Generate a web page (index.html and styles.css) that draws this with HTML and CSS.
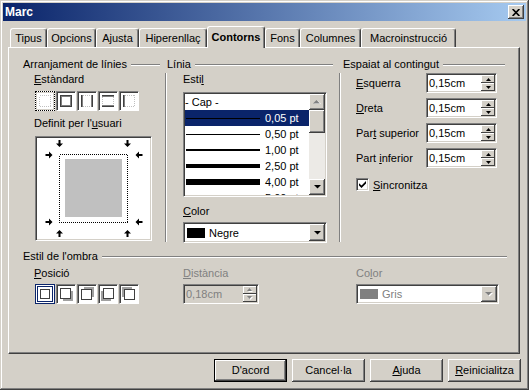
FILE: index.html
```html
<!DOCTYPE html>
<html lang="ca">
<head>
    <meta charset="UTF-8">
    <title>Marc</title>
    <link rel="stylesheet" href="styles.css">
</head>
<body>
    <div class="window">
        <div class="titlebar">
            <span>Marc</span>
            <span class="close raised">
                <svg width="8" height="7" viewBox="0 0 8 7"><path d="M0.6 0 L7.4 7 M7.4 0 L0.6 7" stroke="#000" stroke-width="1.7"/></svg>
            </span>
        </div>

        <div class="tabs">
            <div class="tab">Tipus</div>
            <div class="tab">Opcions</div>
            <div class="tab">Ajusta</div>
            <div class="tab">Hiperenllaç</div>
            <div class="tab active">Contorns</div>
            <div class="tab">Fons</div>
            <div class="tab">Columnes</div>
            <div class="tab">Macroinstrucció</div>
        </div>

        <div class="panel">
            <div class="top">
                <!-- line arrangement -->
                <div class="col col1">
                    <div class="fixedline">Arranjament de línies</div>
                    <div class="col-body">
                        <div class="lbl"><u>E</u>stàndard</div>
                        <div class="valueset">
                            <span class="vbox focus">
                                <svg width="18" height="18" viewBox="0 0 18 18"><rect x="3.5" y="3.5" width="11" height="11" fill="none" stroke="#c0c0c0" stroke-dasharray="1 1" shape-rendering="crispEdges"/></svg>
                            </span>
                            <span class="vbox">
                                <svg width="18" height="18" viewBox="0 0 18 18"><rect x="3.5" y="3.5" width="11" height="11" fill="none" stroke="#404040" stroke-width="1" shape-rendering="crispEdges"/><rect x="4.5" y="4.5" width="9" height="9" fill="none" stroke="#808080" shape-rendering="crispEdges"/></svg>
                            </span>
                            <span class="vbox">
                                <svg width="18" height="18" viewBox="0 0 18 18"><path d="M3 3.5H15M3 14.5H15" stroke="#c0c0c0" stroke-dasharray="1 1" shape-rendering="crispEdges"/><path d="M3.5 3V15M14.5 3V15" stroke="#404040" shape-rendering="crispEdges"/><path d="M4.5 3V15M13.5 3V15" stroke="#808080" shape-rendering="crispEdges"/></svg>
                            </span>
                            <span class="vbox">
                                <svg width="18" height="18" viewBox="0 0 18 18"><path d="M3.5 3V15M14.5 3V15" stroke="#c0c0c0" stroke-dasharray="1 1" shape-rendering="crispEdges"/><path d="M3 3.5H15M3 14.5H15" stroke="#404040" shape-rendering="crispEdges"/><path d="M3 4.5H15M3 13.5H15" stroke="#808080" shape-rendering="crispEdges"/></svg>
                            </span>
                            <span class="vbox">
                                <svg width="18" height="18" viewBox="0 0 18 18"><path d="M3 3.5H15M3 14.5H15M14.5 3V15" stroke="#c0c0c0" stroke-dasharray="1 1" shape-rendering="crispEdges"/><path d="M3.5 3V15" stroke="#404040" shape-rendering="crispEdges"/><path d="M4.5 3V15" stroke="#808080" shape-rendering="crispEdges"/></svg>
                            </span>
                        </div>
                        <div class="lbl gap">Definit per l'<u>u</u>suari</div>
                        <div class="preview sunken">
                            <svg width="113" height="101" viewBox="0 0 113 101">
                                <defs>
                                    <path id="arr" d="M-1 -3.5H1V0H3.5L0 3.5L-3.5 0H-1Z"/>
                                </defs>
                                <rect x="28" y="21" width="57" height="58" fill="#c0c0c0"/>
                                <rect x="22.5" y="16.5" width="68" height="68" fill="none" stroke="#000" stroke-dasharray="1 1" shape-rendering="crispEdges"/>
                                <use href="#arr" transform="translate(22.5 5.5)"/>
                                <use href="#arr" transform="translate(90.5 5.5)"/>
                                <use href="#arr" transform="translate(12 17) rotate(-90)"/>
                                <use href="#arr" transform="translate(12 84) rotate(-90)"/>
                                <use href="#arr" transform="translate(102 17) rotate(90)"/>
                                <use href="#arr" transform="translate(102 84) rotate(90)"/>
                                <use href="#arr" transform="translate(22.5 95.5) rotate(180)"/>
                                <use href="#arr" transform="translate(90.5 95.5) rotate(180)"/>
                            </svg>
                        </div>
                    </div>
                </div>

                <!-- line style -->
                <div class="col col2">
                    <div class="fixedline">Línia</div>
                    <div class="col-body">
                        <div class="lbl">Esti<u>l</u></div>
                        <div class="listbox sunken">
                            <div class="rows">
                                <div class="row">- Cap -</div>
                                <div class="row sel"><span class="ln w1"></span>0,05 pt</div>
                                <div class="row"><span class="ln w1"></span>0,50 pt</div>
                                <div class="row"><span class="ln w2"></span>1,00 pt</div>
                                <div class="row"><span class="ln w4"></span>2,50 pt</div>
                                <div class="row"><span class="ln w6"></span>4,00 pt</div>
                                <div class="row"><span class="ln w7"></span>5,00 pt</div>
                            </div>
                            <div class="vscroll">
                                <span class="sbtn raised">
                                    <svg width="8" height="5" viewBox="0 0 8 5"><path d="M1 4H8L4.5 0.5Z" fill="#fff"/><path d="M0 3.5H7L3.5 0Z" fill="#808080"/></svg>
                                </span>
                                <span class="thumb raised"></span>
                                <span class="track"></span>
                                <span class="sbtn raised">
                                    <svg width="7" height="4" viewBox="0 0 7 4"><path d="M0 0H7L3.5 3.5Z"/></svg>
                                </span>
                            </div>
                        </div>
                        <div class="lbl gap-color"><u>C</u>olor</div>
                        <div class="combo sunken">
                            <span class="swatch"></span>
                            <span class="combo-text">Negre</span>
                            <span class="combo-btn raised">
                                <svg width="7" height="4" viewBox="0 0 7 4"><path d="M0 0H7L3.5 3.5Z"/></svg>
                            </span>
                        </div>
                    </div>
                </div>

                <!-- spacing to contents -->
                <div class="col col3">
                    <div class="fixedline">Espaiat al contingut</div>
                    <div class="col-body">
                        <div class="fields">
                            <div class="field-row">
                                <span class="lbl"><u>E</u>squerra</span>
                                <div class="spin sunken"><span class="spin-val">0,15cm</span><span class="spin-btns"><span class="sb raised"><svg width="5" height="3" viewBox="0 0 5 3"><path d="M0 3H5L2.5 0Z"/></svg></span><span class="sb raised"><svg width="5" height="3" viewBox="0 0 5 3"><path d="M0 0H5L2.5 3Z"/></svg></span></span></div>
                            </div>
                            <div class="field-row">
                                <span class="lbl"><u>D</u>reta</span>
                                <div class="spin sunken"><span class="spin-val">0,15cm</span><span class="spin-btns"><span class="sb raised"><svg width="5" height="3" viewBox="0 0 5 3"><path d="M0 3H5L2.5 0Z"/></svg></span><span class="sb raised"><svg width="5" height="3" viewBox="0 0 5 3"><path d="M0 0H5L2.5 3Z"/></svg></span></span></div>
                            </div>
                            <div class="field-row">
                                <span class="lbl">Par<u>t</u> superior</span>
                                <div class="spin sunken"><span class="spin-val">0,15cm</span><span class="spin-btns"><span class="sb raised"><svg width="5" height="3" viewBox="0 0 5 3"><path d="M0 3H5L2.5 0Z"/></svg></span><span class="sb raised"><svg width="5" height="3" viewBox="0 0 5 3"><path d="M0 0H5L2.5 3Z"/></svg></span></span></div>
                            </div>
                            <div class="field-row">
                                <span class="lbl">Part <u>i</u>nferior</span>
                                <div class="spin sunken"><span class="spin-val">0,15cm</span><span class="spin-btns"><span class="sb raised"><svg width="5" height="3" viewBox="0 0 5 3"><path d="M0 3H5L2.5 0Z"/></svg></span><span class="sb raised"><svg width="5" height="3" viewBox="0 0 5 3"><path d="M0 0H5L2.5 3Z"/></svg></span></span></div>
                            </div>
                        </div>
                        <div class="check-row">
                            <span class="check sunken">
                                <svg width="7" height="7" viewBox="0 0 7 7"><path d="M0 2.2L2.5 4.5L7 0V2.4L2.5 6.9L0 4.4Z"/></svg>
                            </span>
                            <span><u>S</u>incronitza</span>
                        </div>
                    </div>
                </div>
            </div>

            <!-- shadow style -->
            <div class="shadow">
                <div class="fixedline">Estil de l'ombra</div>
                <div class="shadow-body">
                    <div>
                        <div class="lbl"><u>P</u>osició</div>
                        <div class="valueset ctl">
                            <span class="vbox picked">
                                <svg width="18" height="18" viewBox="0 0 18 18"><rect x="4.5" y="4.5" width="9" height="9" fill="#fff" stroke="#404040" shape-rendering="crispEdges"/></svg>
                            </span>
                            <span class="vbox">
                                <svg width="18" height="18" viewBox="0 0 18 18"><rect x="6" y="6" width="10" height="10" fill="#a0a0a0"/><rect x="3.5" y="3.5" width="10" height="10" fill="#fff" stroke="#404040" shape-rendering="crispEdges"/></svg>
                            </span>
                            <span class="vbox">
                                <svg width="18" height="18" viewBox="0 0 18 18"><rect x="6" y="2" width="10" height="10" fill="#a0a0a0"/><rect x="3.5" y="4.5" width="10" height="10" fill="#fff" stroke="#404040" shape-rendering="crispEdges"/></svg>
                            </span>
                            <span class="vbox">
                                <svg width="18" height="18" viewBox="0 0 18 18"><rect x="2" y="6" width="10" height="10" fill="#a0a0a0"/><rect x="4.5" y="3.5" width="10" height="10" fill="#fff" stroke="#404040" shape-rendering="crispEdges"/></svg>
                            </span>
                            <span class="vbox">
                                <svg width="18" height="18" viewBox="0 0 18 18"><rect x="2" y="2" width="10" height="10" fill="#a0a0a0"/><rect x="4.5" y="4.5" width="10" height="10" fill="#fff" stroke="#404040" shape-rendering="crispEdges"/></svg>
                            </span>
                        </div>
                    </div>
                    <div>
                        <div class="lbl off"><u>D</u>istància</div>
                        <div class="spin sunken disabled ctl"><span class="spin-val">0,18cm</span><span class="spin-btns"><span class="sb raised"><svg width="6" height="4" viewBox="0 0 6 4"><path d="M1 4H6L3.5 1.5Z" fill="#fff"/><path d="M0 3H5L2.5 0Z" fill="#808080"/></svg></span><span class="sb raised"><svg width="6" height="4" viewBox="0 0 6 4"><path d="M1 1H6L3.5 4Z" fill="#fff"/><path d="M0 0H5L2.5 3Z" fill="#808080"/></svg></span></span></div>
                    </div>
                    <div>
                        <div class="lbl off">Co<u>l</u>or</div>
                        <div class="combo sunken disabled ctl">
                            <span class="swatch"></span>
                            <span class="combo-text">Gris</span>
                            <span class="combo-btn raised">
                                <svg width="8" height="5" viewBox="0 0 8 5"><path d="M1 1H8L4.5 4.5Z" fill="#fff"/><path d="M0 0H7L3.5 3.5Z" fill="#808080"/></svg>
                            </span>
                        </div>
                    </div>
                </div>
            </div>
        </div>

        <div class="buttons">
            <div class="btn raised default">D'acord</div>
            <div class="btn raised">Cancel·la</div>
            <div class="btn raised"><u>A</u>juda</div>
            <div class="btn raised"><u>R</u>einicialitza</div>
        </div>
    </div>
</body>
</html>
```

FILE: styles.css
```css
* {
    box-sizing: border-box;
}
body {
    margin: 0;
    background-color: #d4d0c8;
    font-family: "Liberation Sans", Arial, sans-serif;
    font-size: 11px;
    color: #000;
}
u {
    text-decoration: underline;
    text-underline-offset: 1px;
}
svg {
    display: block;
}

/* bevels */
.raised {
    background-color: #d4d0c8;
    box-shadow: inset -1px -1px #404040, inset 1px 1px #fff, inset -2px -2px #808080, inset 2px 2px #d4d0c8;
}
.sunken {
    background-color: #fff;
    border: 1px solid;
    border-color: #808080 #fff #fff #808080;
    box-shadow: inset 1px 1px #404040, inset -1px -1px #d4d0c8;
    padding: 1px;
}

/* window frame */
.window {
    width: 529px;
    height: 390px;
    padding: 3px;
    background-color: #d4d0c8;
    box-shadow: inset -1px -1px #404040, inset 1px 1px #d4d0c8, inset -2px -2px #808080, inset 2px 2px #fff;
}
.titlebar {
    height: 18px;
    display: flex;
    align-items: center;
    justify-content: space-between;
    padding: 0 2px 0 2px;
    background: linear-gradient(to right, #0a246a, #a6caf0);
    color: #fff;
    font-weight: bold;
    font-size: 12px;
}
.close {
    width: 16px;
    height: 14px;
    display: flex;
    align-items: center;
    justify-content: center;
}

/* tabs */
.tabs {
    display: grid;
    grid-template-columns: 37px 49px 43px 68px 58px 35px 61px 95px;
    align-items: end;
    height: 21px;
    margin: 5px 0 0 7px;
}
.tab {
    height: 19px;
    border: 1px solid #fff;
    border-bottom: 0;
    border-right-color: #404040;
    border-radius: 3px 3px 0 0;
    box-shadow: inset -1px 0 #808080;
    text-align: center;
    line-height: 18px;
    white-space: nowrap;
    overflow: hidden;
}
.tab.active {
    position: relative;
    height: 22px;
    margin-bottom: -1px;
    background-color: #d4d0c8;
    font-weight: bold;
    line-height: 20px;
}

/* tab page */
.panel {
    width: 512px;
    height: 307px;
    margin-left: 5px;
    padding: 10px 0 0 14px;
    border: 1px solid #fff;
    border-right-color: #404040;
    border-bottom-color: #404040;
    box-shadow: inset -1px -1px #808080;
}
.top {
    display: flex;
}
.fixedline {
    display: flex;
    align-items: center;
    height: 13px;
    line-height: 13px;
    white-space: nowrap;
}
.fixedline::after {
    content: "";
    flex: 1;
    margin-left: 4px;
    border-top: 1px solid #808080;
    border-bottom: 1px solid #fff;
}
.lbl {
    line-height: 13px;
    white-space: nowrap;
}
.lbl.off {
    color: #808080;
}
.col-body {
    height: 169px;
    margin-top: 2px;
}
.col1 {
    width: 137px;
}
.col1 .col-body {
    padding-left: 11px;
}
.col2 {
    width: 166px;
    margin-left: 7px;
}
.col2 .col-body {
    margin-left: -2px;
    padding-left: 17px;
    border-left: 1px solid #808080;
    box-shadow: inset 1px 0 #fff;
}
.col3 {
    width: 162px;
    margin-left: 10px;
}
.col3 .col-body {
    margin-left: -4px;
    padding-left: 16px;
    border-left: 1px solid #808080;
    box-shadow: inset 1px 0 #fff;
}

/* value sets */
.valueset {
    display: flex;
    gap: 1px;
    margin: 5px 0 0 1px;
}
.vbox {
    width: 20px;
    height: 20px;
    background-color: #fff;
    border: 1px solid;
    border-color: #808080 #fff #fff #808080;
    box-shadow: inset 1px 1px #404040;
}
.vbox.focus {
    border: 1px dotted #000;
    box-shadow: inset 1px 1px #d4d0c8, inset -1px -1px #d4d0c8;
}
.vbox.picked {
    border: 1px solid #0a246a;
    box-shadow: inset 0 0 0 1px #fff, inset 0 0 0 2px #0a246a;
}
.lbl.gap {
    margin-top: 6px;
}
.preview {
    width: 117px;
    height: 105px;
    margin: 6px 0 0 1px;
}

/* line style list */
.listbox {
    width: 144px;
    height: 105px;
    margin-top: 6px;
    display: flex;
}
.rows {
    flex: 1;
    overflow: hidden;
}
.row {
    height: 16px;
    display: flex;
    align-items: center;
    white-space: nowrap;
}
.row.sel {
    background-color: #0a246a;
    color: #fff;
}
.ln {
    flex: none;
    width: 74px;
    margin: 0 5px 0 1px;
    background-color: #000;
}
.ln.w1 { height: 1px; }
.ln.w2 { height: 2px; }
.ln.w4 { height: 4px; }
.ln.w6 { height: 6px; }
.ln.w7 { height: 7px; }
.vscroll {
    width: 16px;
    display: flex;
    flex-direction: column;
}
.sbtn {
    height: 16px;
    display: flex;
    align-items: center;
    justify-content: center;
}
.thumb {
    height: 23px;
}
.track {
    flex: 1;
    background-color: #eceae6;
}
.lbl.gap-color {
    margin-top: 8px;
}

/* combo box */
.combo {
    width: 144px;
    height: 21px;
    margin-top: 4px;
    display: flex;
    align-items: center;
}
.swatch {
    width: 18px;
    height: 10px;
    margin-left: 2px;
    background-color: #000;
}
.combo-text {
    flex: 1;
    margin-left: 4px;
}
.combo-btn {
    width: 16px;
    align-self: stretch;
    display: flex;
    align-items: center;
    justify-content: center;
}
.combo.disabled .swatch {
    background-color: #808080;
}
.combo.disabled .combo-text {
    color: #808080;
}

/* spin fields */
.fields {
    display: flex;
    flex-direction: column;
    gap: 5px;
}
.field-row {
    display: flex;
    align-items: center;
    height: 20px;
}
.field-row .lbl {
    width: 70px;
}
.spin {
    width: 71px;
    height: 20px;
    display: flex;
    align-items: center;
}
.spin-val {
    flex: 1;
    padding-left: 1px;
}
.spin-btns {
    width: 14px;
    align-self: stretch;
    display: flex;
    flex-direction: column;
}
.sb {
    flex: 1;
    display: flex;
    align-items: center;
    justify-content: center;
    box-shadow: inset -1px -1px #404040, inset 1px 1px #fff;
}
.spin.disabled {
    width: 76px;
    background-color: #d4d0c8;
    color: #808080;
}
.check-row {
    display: flex;
    align-items: center;
    gap: 4px;
    margin-top: 10px;
}
.check {
    width: 13px;
    height: 13px;
    display: flex;
    align-items: center;
    justify-content: center;
}

/* shadow group */
.shadow {
    width: 484px;
    margin-top: 8px;
}
.shadow-body {
    display: grid;
    grid-template-columns: 149px 173px 143px;
    padding-left: 11px;
    margin-top: 4px;
}
.ctl {
    margin-top: 4px;
}
.shadow-body .valueset {
    margin-top: 4px;
}
.shadow-body .combo {
    width: 143px;
    height: 20px;
}

/* dialog buttons */
.buttons {
    display: flex;
    justify-content: flex-end;
    gap: 5px;
    margin-top: 5px;
    padding-right: 5px;
}
.btn {
    width: 73px;
    height: 23px;
    line-height: 23px;
    text-align: center;
    white-space: nowrap;
}
.btn.default {
    border: 1px solid #000;
    line-height: 21px;
}
```
